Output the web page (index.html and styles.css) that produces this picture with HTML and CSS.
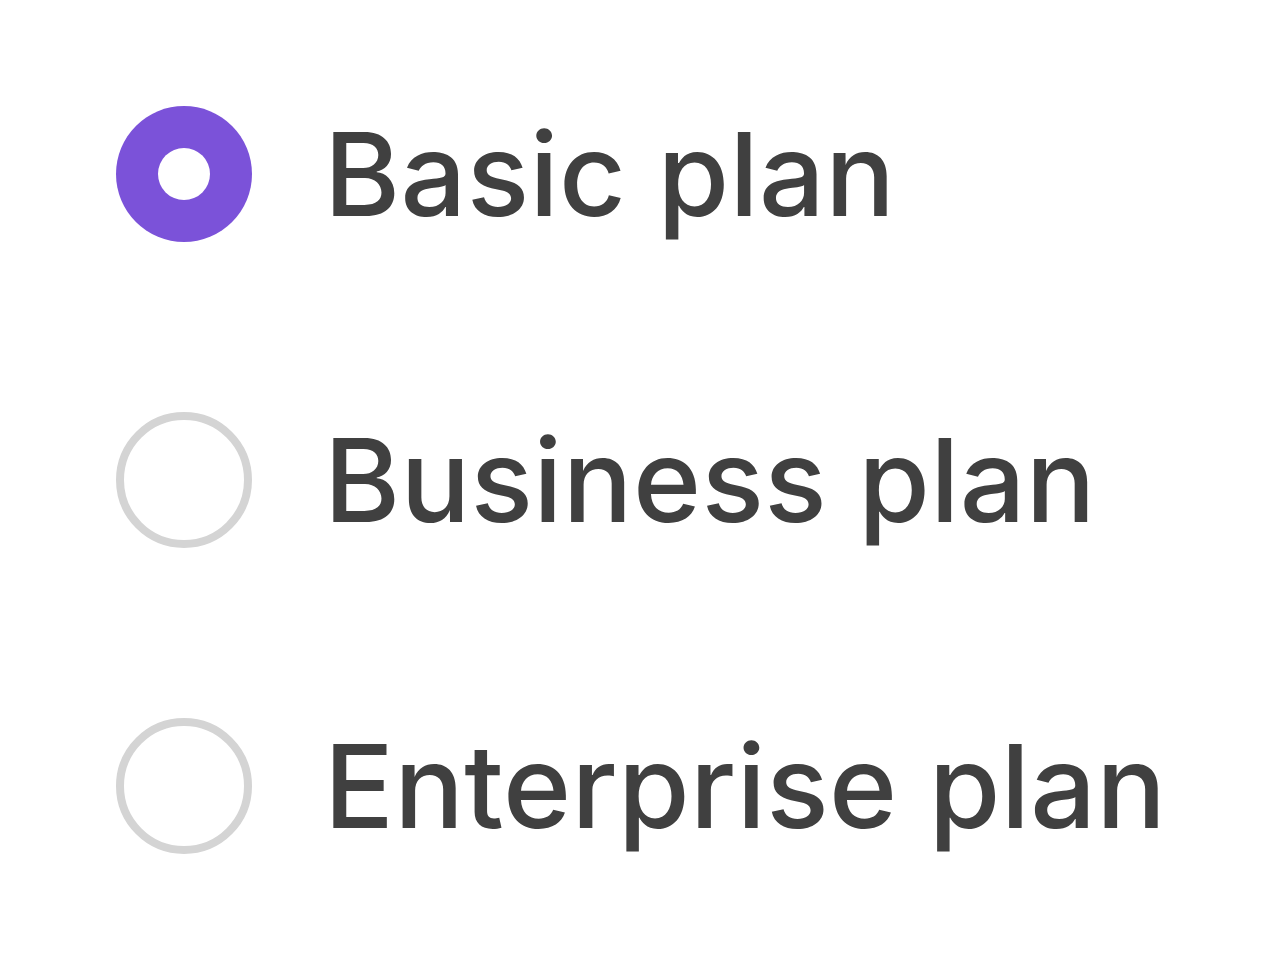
FILE: index.html
```html
<!DOCTYPE html>
<html>
<head>
<meta charset="utf-8">
<link rel="stylesheet" href="styles.css">
</head>
<body>
<div class="plans">
  <label class="plan">
    <svg class="radio" viewBox="0 0 136 136"><circle cx="68" cy="68" r="68" fill="#7b52d9"/><circle cx="68" cy="68" r="26" fill="#fff"/></svg>
    <span class="label">Basic plan</span>
  </label>
  <label class="plan">
    <svg class="radio" viewBox="0 0 136 136"><circle cx="68" cy="68" r="64" fill="#fff" stroke="#d4d4d4" stroke-width="8"/></svg>
    <span class="label">Business plan</span>
  </label>
  <label class="plan">
    <svg class="radio" viewBox="0 0 136 136"><circle cx="68" cy="68" r="64" fill="#fff" stroke="#d4d4d4" stroke-width="8"/></svg>
    <span class="label">Enterprise plan</span>
  </label>
</div>
</body>
</html>
```
FILE: styles.css
```css
html, body { margin: 0; background: #fff; }
body { width: 1280px; height: 960px; overflow: hidden; font-family: Inter, "Liberation Sans", sans-serif; }
.plans { display: flex; flex-direction: column; gap: 170px; padding: 106px 0 0 116px; }
.plan { display: flex; align-items: center; gap: 72px; height: 136px; }
.radio { width: 136px; height: 136px; flex: none; display: block; }
.label { font-size: 116px; color: #404040; line-height: 1; font-weight: 500; letter-spacing: 0.3px; }
```
